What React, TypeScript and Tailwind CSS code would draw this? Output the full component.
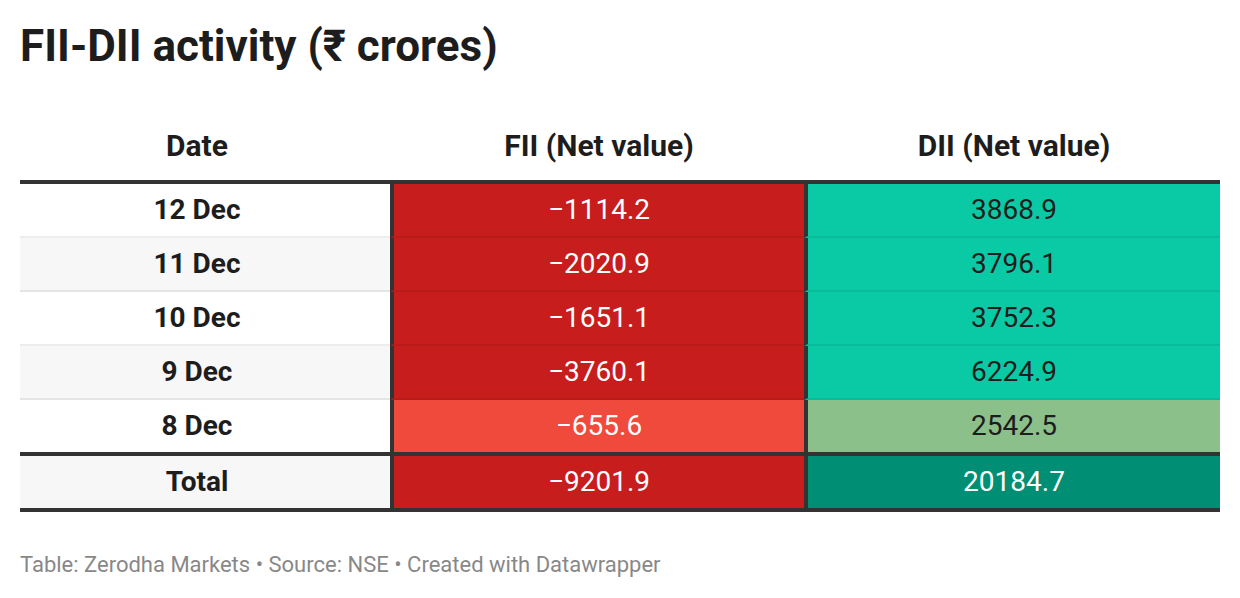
import React from "react"

type Row = {
  date: string
  fii: string
  dii: string
  fiiBg: string
  diiBg: string
  fiiText: string
  diiText: string
  band: string
}

const ROWS: Row[] = [
  { date: "12 Dec", fii: "−1114.2", dii: "3868.9", fiiBg: "bg-[#c71d1d]", diiBg: "bg-[#0acaa6]", fiiText: "text-white", diiText: "text-[#1d1d1d]", band: "bg-white" },
  { date: "11 Dec", fii: "−2020.9", dii: "3796.1", fiiBg: "bg-[#c71d1d]", diiBg: "bg-[#0acaa6]", fiiText: "text-white", diiText: "text-[#1d1d1d]", band: "bg-[#f7f7f7]" },
  { date: "10 Dec", fii: "−1651.1", dii: "3752.3", fiiBg: "bg-[#c71d1d]", diiBg: "bg-[#0acaa6]", fiiText: "text-white", diiText: "text-[#1d1d1d]", band: "bg-white" },
  { date: "9 Dec", fii: "−3760.1", dii: "6224.9", fiiBg: "bg-[#c71d1d]", diiBg: "bg-[#0acaa6]", fiiText: "text-white", diiText: "text-[#1d1d1d]", band: "bg-[#f7f7f7]" },
  { date: "8 Dec", fii: "−655.6", dii: "2542.5", fiiBg: "bg-[#ef4a3c]", diiBg: "bg-[#8cc08b]", fiiText: "text-white", diiText: "text-[#1d1d1d]", band: "bg-white" },
]

function DataRow({ row, last }: { row: Row; last: boolean }) {
  const sep = last ? "h-[52px]" : "h-[54px] border-b-2 border-black/[0.07]"
  return (
    <div className="grid grid-cols-[370px_414px_416px]">
      <div className={`${row.band} ${sep} pr-[16px] flex items-center justify-center font-bold`}>{row.date}</div>
      <div className={`${row.fiiBg} ${row.fiiText} ${sep} border-l-4 border-l-[#333333] flex items-center justify-center`}>{row.fii}</div>
      <div className={`${row.diiBg} ${row.diiText} ${sep} border-l-4 border-l-[#333333] flex items-center justify-center`}>{row.dii}</div>
    </div>
  )
}

export default function App() {
  return (
    <div className="w-[1240px] h-[598px] bg-white px-[20px] pt-[24px] text-[#1d1d1d]" style={{ fontFamily: "Roboto, 'Liberation Sans', sans-serif" }}>
      <h1 className="text-[44px] leading-[44px] font-bold">FII-DII activity (₹ crores)</h1>

      <div className="mt-[64px] text-[28px] leading-[28px]">
        <div className="grid grid-cols-[370px_414px_416px] font-bold text-[30px] pb-[20px]">
          <div className="text-center pr-[16px]">Date</div>
          <div className="text-center pl-[4px]">FII (Net value)</div>
          <div className="text-center pl-[4px]">DII (Net value)</div>
        </div>

        <div className="border-t-4 border-b-4 border-[#333333]">
          {ROWS.map((row, i) => (
            <DataRow key={row.date} row={row} last={i === ROWS.length - 1} />
          ))}
          <div className="grid grid-cols-[370px_414px_416px] border-t-4 border-[#333333]">
            <div className="bg-[#f7f7f7] h-[52px] pr-[16px] flex items-center justify-center font-bold">Total</div>
            <div className="bg-[#c71d1d] text-white h-[52px] border-l-4 border-l-[#333333] flex items-center justify-center">−9201.9</div>
            <div className="bg-[#008f74] text-white h-[52px] border-l-4 border-l-[#333333] flex items-center justify-center">20184.7</div>
          </div>
        </div>
      </div>

      <p className="mt-[42px] text-[22px] leading-[22px] text-[#888888]">
        Table: Zerodha Markets • Source: NSE • Created with Datawrapper
      </p>
    </div>
  )
}
